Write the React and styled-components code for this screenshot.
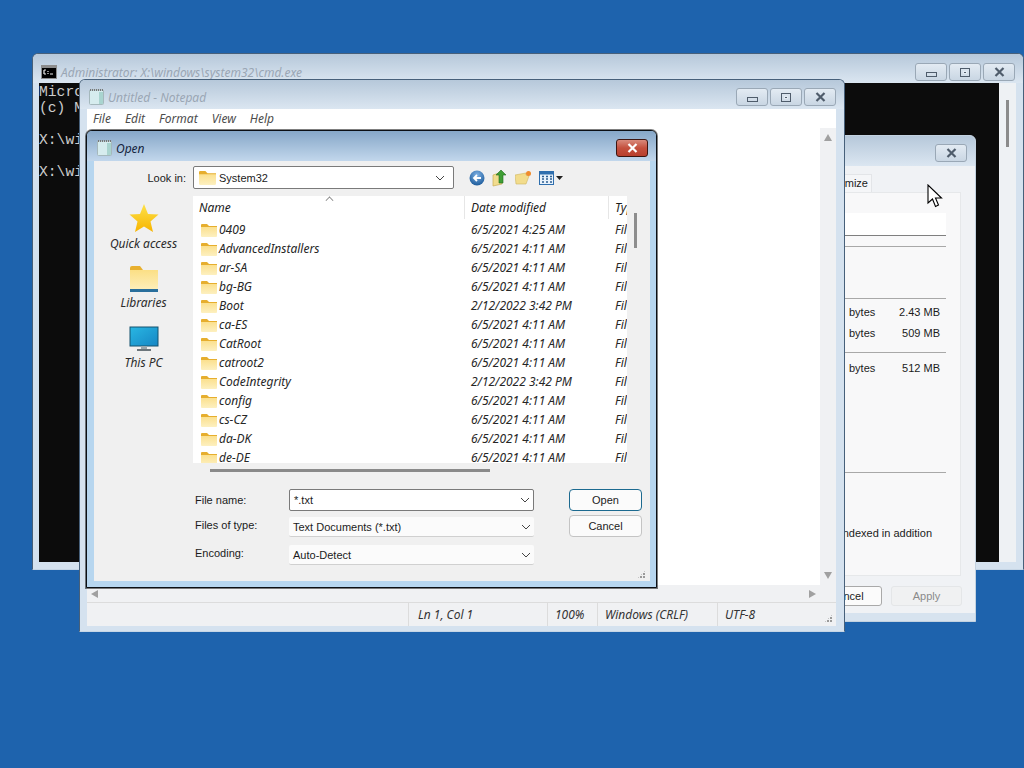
import React from 'react'
import styled, { createGlobalStyle, css } from 'styled-components'

const Global = createGlobalStyle`
  html, body { margin: 0; padding: 0; background: #1e63ad; }
  body { font-family: "Liberation Sans", Arial, sans-serif; font-size: 11px; color: #1b1b1b; }
`

const italicText = css`
  font-family: "Noto Sans", "Liberation Sans", sans-serif;
  font-size: 12px;
  font-style: italic;
`

const files = [
  ['0409', '6/5/2021 4:25 AM'],
  ['AdvancedInstallers', '6/5/2021 4:11 AM'],
  ['ar-SA', '6/5/2021 4:11 AM'],
  ['bg-BG', '6/5/2021 4:11 AM'],
  ['Boot', '2/12/2022 3:42 PM'],
  ['ca-ES', '6/5/2021 4:11 AM'],
  ['CatRoot', '6/5/2021 4:11 AM'],
  ['catroot2', '6/5/2021 4:11 AM'],
  ['CodeIntegrity', '2/12/2022 3:42 PM'],
  ['config', '6/5/2021 4:11 AM'],
  ['cs-CZ', '6/5/2021 4:11 AM'],
  ['da-DK', '6/5/2021 4:11 AM'],
  ['de-DE', '6/5/2021 4:11 AM'],
]

const Folder = ({ size = 16 }) => (
  <svg width={size} height={size * 0.875} viewBox="0 0 16 14">
    <defs>
      <linearGradient id="fold" x1="0" y1="0" x2="0" y2="1">
        <stop offset="0" stopColor="#fbe08e" />
        <stop offset="1" stopColor="#fdf0c0" />
      </linearGradient>
    </defs>
    <path d="M0 2 Q0 1 1 1 H6 L8 3 H16 V5 H0 Z" fill="#e6ae2e" />
    <path d="M0 4 H16 V13 Q16 14 15 14 H1 Q0 14 0 13 Z" fill="url(#fold)" />
  </svg>
)

const Star = () => (
  <svg width="30" height="30" viewBox="0 0 30 30">
    <defs>
      <linearGradient id="star" x1="0" y1="0" x2="0" y2="1">
        <stop offset="0" stopColor="#fde24a" />
        <stop offset="1" stopColor="#f7b400" />
      </linearGradient>
    </defs>
    <path d="M15 1 L19 11 L29.500 11.500 L21.500 18.500 L24 29 L15 23.500 L6 29 L8.500 18.500 L.5 11.500 L11 11 Z" fill="url(#star)" />
  </svg>
)

const LibraryIcon = () => (
  <svg width="30" height="26" viewBox="0 0 30 26">
    <defs>
      <linearGradient id="lib" x1="0" y1="0" x2="0" y2="1">
        <stop offset="0" stopColor="#fbdf85" />
        <stop offset="1" stopColor="#fdeeb8" />
      </linearGradient>
    </defs>
    <path d="M1 2 Q1 0 3 0 H11 L14 4 H29 V8 H1 Z" fill="#e8b02f" />
    <rect x="1" y="4" width="28" height="19" fill="url(#lib)" />
    <rect x="1" y="23" width="28" height="3" fill="#2a6f9c" />
  </svg>
)

const MonitorIcon = () => (
  <svg width="30" height="26" viewBox="0 0 30 26">
    <defs>
      <linearGradient id="mon" x1="0" y1="0" x2="1" y2="1">
        <stop offset="0" stopColor="#29b7e3" />
        <stop offset="1" stopColor="#1686c4" />
      </linearGradient>
    </defs>
    <rect x="1" y="1" width="28" height="19" fill="url(#mon)" stroke="#14526f" />
    <rect x="12" y="20" width="6" height="3" fill="#9aa5ab" />
    <rect x="8" y="23" width="14" height="2" fill="#6b757b" />
  </svg>
)

const CmdIcon = () => (
  <svg width="16" height="14" viewBox="0 0 16 14">
    <rect width="16" height="14" fill="#8d8d8d" />
    <rect x="1" y="3" width="14" height="10" fill="#000" />
    <path d="M3 5 H5 M3 5 V9 M3 9 H5 M7 6 V7 M7 8 V9 M9 9 H12" stroke="#eee" strokeWidth="1.200" fill="none" />
  </svg>
)

const NotepadIcon = () => (
  <svg width="15" height="16" viewBox="0 0 15 16">
    <rect x="0.500" y="1" width="14" height="14.500" rx="1" fill="#d6ecee" stroke="#a5b8bc" />
    <path d="M10 3 V15 H14 V3 Z" fill="#a9d4cf" />
    <path d="M1 1 H14" stroke="#777" strokeDasharray="1 1" strokeWidth="2" />
  </svg>
)

const BackIcon = () => (
  <svg width="16" height="16" viewBox="0 0 16 16">
    <defs>
      <radialGradient id="back" cx="0.500" cy="0.300" r="0.800">
        <stop offset="0" stopColor="#7fb2e5" />
        <stop offset="1" stopColor="#0f4f90" />
      </radialGradient>
    </defs>
    <circle cx="8" cy="8" r="7.500" fill="url(#back)" />
    <path d="M12 8 H5 M8 5 L5 8 L8 11" stroke="#fff" strokeWidth="1.800" fill="none" />
  </svg>
)

const UpIcon = () => (
  <svg width="16" height="18" viewBox="0 0 16 18">
    <path d="M1 6 L10 3 V15 L1 17 Z" fill="#f1dc8e" stroke="#c8ae55" strokeWidth="0.700" />
    <path d="M9 1 L14 6 H11 V14 H7 V6 H4 Z" fill="#3f9e35" stroke="#1f6b1d" strokeWidth="0.600" />
  </svg>
)

const NewFolderIcon = () => (
  <svg width="17" height="15" viewBox="0 0 17 15">
    <path d="M0 5 L11 3 V5 L14 6 L11 14 H1 Z" fill="#f2dc8c" stroke="#cfb560" strokeWidth="0.600" />
    <circle cx="13.500" cy="3.500" r="2.500" fill="#ef8b2c" />
  </svg>
)

const ViewIcon = () => (
  <svg width="24" height="14" viewBox="0 0 24 14">
    <rect x="0.500" y="0.500" width="14" height="13" fill="#e8f2fb" stroke="#2f6fae" />
    <rect x="0.500" y="0.500" width="14" height="3" fill="#2f6fae" />
    <path d="M3 5.500 H5 M7 5.500 H9 M11 5.500 H13 M3 8 H5 M7 8 H9 M11 8 H13 M3 11 H5 M7 11 H9 M11 11 H13" stroke="#2d5f93" strokeWidth="1.500" />
    <path d="M17 5 H24 L20.500 9 Z" fill="#222" />
  </svg>
)

const CursorIcon = () => (
  <svg width="16" height="24" viewBox="0 0 16 24">
    <path d="M1 1 V19 L5.500 15 L8.500 22.500 L11.500 21 L8.500 14 H14.500 Z" fill="#fff" stroke="#000" strokeWidth="1.100" />
  </svg>
)

const Chevron = () => (
  <svg width="10" height="6" viewBox="0 0 10 6">
    <path d="M1 1 L5 5 L9 1" stroke="#444" fill="none" />
  </svg>
)

const CloseGlyph = ({ color = '#4f5c6b' }) => (
  <svg width="11" height="10" viewBox="0 0 11 10">
    <path d="M1.500 1 L9.500 9 M9.500 1 L1.500 9" stroke={color} strokeWidth="2.200" />
  </svg>
)

const Desktop = styled.div`
  position: relative;
  width: 1024px;
  height: 768px;
  overflow: hidden;
  background: #1e63ad;
`

const Frame = styled.div`
  position: absolute;
  left: ${p => p.$x}px;
  top: ${p => p.$y}px;
  width: ${p => p.$w}px;
  height: ${p => p.$h}px;
  box-sizing: border-box;
  display: flex;
  flex-direction: column;
  border-radius: 6px 6px 0 0;
  background: ${p => p.$tint || '#d5e2ef'};
  border: 1px solid ${p => p.$edge || '#47607a'};
  border-bottom-color: ${p => p.$foot || p.$edge || '#c6d6e6'};
  box-shadow: ${p => p.$heavy ? '0 0 0 1px rgba(0, 0, 0, .5)' : 'none'};
`

const TitleBar = styled.div`
  flex: none;
  height: ${p => p.$h}px;
  display: flex;
  align-items: center;
  gap: 4px;
  box-sizing: border-box;
  padding: ${p => p.$drop || 0}px 8px 0 ${p => p.$pad || 8}px;
  border-radius: 5px 5px 0 0;
  background: linear-gradient(${p => p.$from || '#b6c8da'}, ${p => p.$to || '#dbe6f1'});
`

const TitleText = styled.span`
  flex: 1;
  ${italicText}
  color: ${p => p.$active ? '#16263e' : '#9aa6b4'};
  white-space: nowrap;
`

const Caption = styled.div`
  display: flex;
  gap: 2px;
`

const CaptionBtn = styled.button`
  width: 32px;
  height: 18px;
  padding: 0;
  display: flex;
  align-items: center;
  justify-content: center;
  border: 1px solid #9aa8b6;
  border-radius: 3px;
  background: linear-gradient(#e3ebf3, #c9d6e3);
`

const DangerBtn = styled(CaptionBtn)`
  border-color: #3d1510;
  background: linear-gradient(#d98a7c, #c4503e 50%, #b83f2d);
`

const MinGlyph = styled.span`
  display: block;
  width: 9px;
  height: 3px;
  margin-top: 4px;
  border: 1px solid #4f5c6b;
`

const MaxGlyph = styled.span`
  display: block;
  width: 8px;
  height: 7px;
  border: 1px solid #4f5c6b;
  position: relative;
  &::after {
    content: '';
    position: absolute;
    left: 2px;
    top: 2px;
    width: 4px;
    height: 3px;
    background: #4f5c6b;
    outline: 1px solid #e3ebf3;
    outline-offset: -1px;
  }
`

const CmdBody = styled.div`
  flex: 1;
  display: flex;
  min-height: 0;
  padding: 0 7px 7px 6px;
`

const Console = styled.pre`
  flex: none;
  width: 960px;
  margin: 0;
  padding-top: 1px;
  box-sizing: border-box;
  background: #0c0c0c;
  color: #cccccc;
  font-family: "Liberation Mono", monospace;
  font-size: 14.670px;
  line-height: 16px;
  overflow: hidden;
`

const CmdTrack = styled.div`
  flex: 1;
  position: relative;
  background: #eef1f4;
  &::after {
    content: '';
    position: absolute;
    left: 7px;
    top: 17px;
    width: 3px;
    height: 47px;
    background: #8b8b8b;
  }
`

const PropsBody = styled.div`
  flex: 1;
  display: flex;
  flex-direction: column;
  padding: 0 14px 9px 10px;
  min-height: 0;
  background: #f0f2f5;
  margin: 0 0 8px 0;
`

const TabRow = styled.div`
  flex: none;
  height: 26px;
  display: flex;
  justify-content: flex-end;
  align-items: flex-end;
  padding-right: 89px;
`

const Tab = styled.div`
  height: 17px;
  line-height: 16px;
  padding: 0 3px 0 40px;
  background: #f5f6f8;
  border: 1px solid #e3e5e8;
  border-bottom: 0;
`

const PropsPanel = styled.div`
  flex: none;
  height: 384px;
  box-sizing: border-box;
  background: #f8f8f9;
  border: 1px solid #e6e8ea;
  padding: 20px 14px 0 0;
  display: flex;
  flex-direction: column;
`

const PropsInput = styled.div`
  height: 22px;
  background: #fff;
  border-bottom: 1px solid #7f7f7f;
`

const Rule = styled.div`
  flex: none;
  height: 1px;
  margin-top: ${p => p.$top}px;
  background: #a8a8a8;
`

const SizeRow = styled.div`
  height: 21px;
  line-height: 21px;
  margin-top: ${p => p.$top || 0}px;
  display: flex;
  justify-content: flex-end;
  padding-right: 6px;
`

const SizeUnit = styled.span`
  margin-right: auto;
  margin-left: 277px;
`

const PropsNote = styled.div`
  margin-top: 54px;
  text-align: right;
  padding-right: 14px;
  white-space: nowrap;
`

const PropsFooter = styled.div`
  flex: none;
  display: flex;
  justify-content: flex-end;
  gap: 9px;
  margin-top: 10px;
  margin-right: -1px;
`

const FootBtn = styled.div`
  width: 71px;
  height: 20px;
  line-height: 18px;
  box-sizing: border-box;
  text-align: center;
  border-radius: 3px;
  border: 1px solid ${p => p.$off ? '#e4e6e8' : '#a9a9a9'};
  color: ${p => p.$off ? '#8a8a8a' : '#1b1b1b'};
  background: ${p => p.$off ? '#f0f1f2' : '#fbfbfb'};
`

const NoteBody = styled.div`
  flex: 1;
  display: flex;
  flex-direction: column;
  min-height: 0;
  padding: 0 8px 7px 7px;
`

const MenuBar = styled.div`
  flex: none;
  height: 19px;
  display: flex;
  align-items: center;
  gap: 14px;
  padding-left: 6px;
  background: #fff;
  ${italicText}
  color: #4c4c4c;
`

const EditorRow = styled.div`
  flex: none;
  height: 457px;
  display: flex;
  background: #fff;
`

const EditorArea = styled.div`
  flex: 1;
`

const VTrack = styled.div`
  flex: none;
  width: 16px;
  display: flex;
  flex-direction: column;
  justify-content: space-between;
  align-items: center;
  padding: 6px 0;
  box-sizing: border-box;
  background: #f0f1f3;
`

const Arrow = styled.span`
  width: 0;
  height: 0;
  border-style: solid;
  border-color: transparent;
  ${p => p.$dir === 'up' && 'border-width: 0 4px 7px; border-bottom-color: #a0a0a0;'}
  ${p => p.$dir === 'down' && 'border-width: 7px 4px 0; border-top-color: #a0a0a0;'}
  ${p => p.$dir === 'left' && 'border-width: 4px 7px 4px 0; border-right-color: #a0a0a0;'}
  ${p => p.$dir === 'right' && 'border-width: 4px 0 4px 7px; border-left-color: #a0a0a0;'}
`

const HTrack = styled.div`
  flex: none;
  height: 17px;
  display: flex;
  justify-content: space-between;
  align-items: center;
  padding: 0 20px 0 4px;
  background: #f0f1f3;
  border-bottom: 1px solid #dcdcdc;
`

const StatusBar = styled.div`
  flex: 1;
  display: grid;
  grid-template-columns: 321px 139px 50px 120px 1fr;
  align-items: stretch;
  background: #f0f1f3;
  ${italicText}
  color: #333;
  position: relative;
`

const StatusCell = styled.div`
  display: flex;
  align-items: center;
  padding-left: ${p => p.$wide ? 9 : 7}px;
  border-left: ${p => p.$plain ? '0' : '1px solid #dcdcdc'};
  white-space: nowrap;
  height: 23px;
`

const Grip = styled.div`
  position: absolute;
  right: ${p => p.$right || 3}px;
  bottom: ${p => p.$bottom || 3}px;
  width: 9px;
  height: 9px;
  background-image: radial-gradient(circle at 1px 1px, #9a9a9a 1px, transparent 1.200px);
  background-size: 3px 3px;
  clip-path: polygon(100% 0, 100% 100%, 0 100%);
`

const DialogBody = styled.div`
  flex: 1;
  position: relative;
  min-height: 0;
  box-sizing: border-box;
  margin: 0 6px 6px 7px;
  background: #f0f0f0;
  display: grid;
  grid-template-columns: 99px 1fr;
  grid-template-rows: 35px 267px 1fr;
`

const LookRow = styled.div`
  grid-column: 1 / 3;
  display: flex;
  align-items: center;
  padding-bottom: 2px;
  box-sizing: border-box;
`

const LookLabel = styled.label`
  width: 99px;
  text-align: right;
  padding-right: 7px;
  box-sizing: border-box;
  flex: none;
`

const LookCombo = styled.div`
  flex: none;
  width: 261px;
  height: 23px;
  box-sizing: border-box;
  display: flex;
  align-items: center;
  gap: 3px;
  padding: 0 8px 0 5px;
  background: #fff;
  border: 1px solid #7a7a7a;
  border-radius: 2px;
`

const ComboText = styled.span`
  flex: 1;
  white-space: nowrap;
`

const ToolGroup = styled.div`
  display: flex;
  align-items: center;
  gap: 7px;
  margin-left: 15px;
`

const Places = styled.div`
  display: flex;
  flex-direction: column;
  align-items: center;
  padding-top: 7px;
  ${italicText}
`

const Place = styled.div`
  display: flex;
  flex-direction: column;
  align-items: center;
  flex: none;
  height: ${p => p.$h}px;
  box-sizing: border-box;
  gap: 2px;
  color: #2b2b2b;
`

const ListWrap = styled.div`
  position: relative;
  display: flex;
  min-height: 0;
`

const List = styled.div`
  width: 434px;
  flex: none;
  background: #fff;
  overflow: hidden;
  ${italicText}
`

const ListHead = styled.div`
  height: 24px;
  display: grid;
  grid-template-columns: 271px 144px 1fr;
  align-items: start;
  position: relative;
`

const HeadCell = styled.div`
  padding-left: 6px;
  height: 23px;
  line-height: 23px;
  border-left: ${p => p.$first ? '0' : '1px solid #e6e6e6'};
  box-sizing: border-box;
  white-space: nowrap;
`

const SortCaret = styled.span`
  position: absolute;
  left: 133px;
  top: 1px;
  width: 6px;
  height: 6px;
  border-left: 1px solid #777;
  border-top: 1px solid #777;
  transform: rotate(45deg) scale(.8);
`

const FileRow = styled.div`
  height: 19px;
  display: grid;
  grid-template-columns: 271px 144px 1fr;
  align-items: center;
  white-space: nowrap;
  color: #262626;
`

const NameCell = styled.div`
  display: flex;
  align-items: center;
  gap: 2px;
  padding-left: 8px;
`

const PlainCell = styled.div`
  padding-left: 7px;
`

const VThumb = styled.div`
  position: absolute;
  left: 441px;
  top: 17px;
  width: 3px;
  height: 35px;
  background: #8d8d8d;
`

const FormArea = styled.div`
  grid-column: 2;
  position: relative;
  display: grid;
  grid-template-columns: 94px 245px 1fr;
  grid-template-rows: 21px 21px 21px;
  row-gap: 7px;
  padding-top: 26px;
  padding-left: 2px;
  align-items: center;
`

const HScroll = styled.div`
  position: absolute;
  left: 17px;
  top: 6px;
  width: 280px;
  height: 3px;
  background: #8a8a8a;
`

const FormLabel = styled.label`
  margin-bottom: ${p => p.$raise || 0}px;
`

const Combo = styled.div`
  height: ${p => p.$edit ? 22 : 20}px;
  box-sizing: border-box;
  display: flex;
  align-items: center;
  padding: 0 3px 0 4px;
  margin-bottom: ${p => p.$edit ? 0 : 1}px;
  background: ${p => p.$edit ? '#fff' : '#fbfbfb'};
  border: ${p => p.$edit ? '1px solid #7a7a7a' : '0'};
  border-bottom: 1px solid ${p => p.$edit ? '#7a7a7a' : '#d0d0d0'};
  border-radius: 2px;
`

const DlgBtn = styled.button`
  width: 73px;
  height: 22px;
  margin-left: 35px;
  margin-bottom: ${p => p.$raise || 0}px;
  padding: 0;
  font-family: inherit;
  font-size: 11px;
  color: #1b1b1b;
  border-radius: 4px;
  background: #fbfbfb;
  border: 1px solid ${p => p.$main ? '#1c6a90' : '#c4c4c4'};
`

const Pointer = styled.div`
  position: absolute;
  left: 927px;
  top: 184px;
  line-height: 0;
`

const App = () => (
  <Desktop>
    <Global />

    <Frame $x={32} $y={53} $w={992} $h={517}>
      <TitleBar $h={29} $drop={7}>
        <CmdIcon />
        <TitleText>Administrator: X:\windows\system32\cmd.exe</TitleText>
        <Caption>
          <CaptionBtn><MinGlyph /></CaptionBtn>
          <CaptionBtn><MaxGlyph /></CaptionBtn>
          <CaptionBtn><CloseGlyph /></CaptionBtn>
        </Caption>
      </TitleBar>
      <CmdBody>
        <Console>{`Microsoft Windows [Version 10.0.22000.434]
(c) Microsoft Corporation. All rights reserved.

X:\\windows\\system32>notepad

X:\\windows\\system32>`}</Console>
        <CmdTrack />
      </CmdBody>
    </Frame>

    <Frame $x={560} $y={135} $w={416} $h={487} $edge="#c3d2e0" $tint="#d7e3ef">
      <TitleBar $h={30} $drop={3}>
        <TitleText />
        <Caption><CaptionBtn><CloseGlyph /></CaptionBtn></Caption>
      </TitleBar>
      <PropsBody>
        <TabRow><Tab>Customize</Tab></TabRow>
        <PropsPanel>
          <PropsInput />
          <Rule $top={10} />
          <Rule $top={51} />
          <SizeRow $top={3}><SizeUnit>bytes</SizeUnit>2.43 MB</SizeRow>
          <SizeRow><SizeUnit>bytes</SizeUnit>509 MB</SizeRow>
          <Rule $top={8} />
          <SizeRow $top={5}><SizeUnit>bytes</SizeUnit>512 MB</SizeRow>
          <Rule $top={93} />
          <PropsNote>Allow files on this drive to have contents indexed in addition</PropsNote>
        </PropsPanel>
        <PropsFooter>
          <FootBtn>Cancel</FootBtn>
          <FootBtn $off>Apply</FootBtn>
        </PropsFooter>
      </PropsBody>
    </Frame>

    <Frame $x={79} $y={79} $w={766} $h={553}>
      <TitleBar $h={29} $pad={9} $drop={5}>
        <NotepadIcon />
        <TitleText>Untitled - Notepad</TitleText>
        <Caption>
          <CaptionBtn><MinGlyph /></CaptionBtn>
          <CaptionBtn><MaxGlyph /></CaptionBtn>
          <CaptionBtn><CloseGlyph /></CaptionBtn>
        </Caption>
      </TitleBar>
      <NoteBody>
        <MenuBar>
          <span>File</span><span>Edit</span><span>Format</span><span>View</span><span>Help</span>
        </MenuBar>
        <EditorRow>
          <EditorArea />
          <VTrack><Arrow $dir="up" /><Arrow $dir="down" /></VTrack>
        </EditorRow>
        <HTrack><Arrow $dir="left" /><Arrow $dir="right" /></HTrack>
        <StatusBar>
          <StatusCell $plain />
          <StatusCell $wide>Ln 1, Col 1</StatusCell>
          <StatusCell>100%</StatusCell>
          <StatusCell>Windows (CRLF)</StatusCell>
          <StatusCell>UTF-8</StatusCell>
          <Grip />
        </StatusBar>
      </NoteBody>
    </Frame>

    <Frame $x={86} $y={130} $w={571} $h={458} $edge="#0b0f14" $tint="#b7d6ef" $heavy>
      <TitleBar $h={30} $from="#86a7c8" $to="#c2d7ec" $pad={10} $drop={4}>
        <NotepadIcon />
        <TitleText $active>Open</TitleText>
        <Caption>
          <DangerBtn><CloseGlyph color="#fff" /></DangerBtn>
        </Caption>
      </TitleBar>
      <DialogBody>
        <LookRow>
          <LookLabel>Look in:</LookLabel>
          <LookCombo>
            <Folder size={17} />
            <ComboText>System32</ComboText>
            <Chevron />
          </LookCombo>
          <ToolGroup>
            <BackIcon />
            <UpIcon />
            <NewFolderIcon />
            <ViewIcon />
          </ToolGroup>
        </LookRow>
        <Places>
          <Place $h={63}><Star />Quick access</Place>
          <Place $h={60}><LibraryIcon />Libraries</Place>
          <Place $h={60}><MonitorIcon />This PC</Place>
        </Places>
        <ListWrap>
          <List>
            <ListHead>
              <HeadCell $first>Name</HeadCell>
              <HeadCell>Date modified</HeadCell>
              <HeadCell>Type</HeadCell>
              <SortCaret />
            </ListHead>
            {files.map(([name, date]) => (
              <FileRow key={name}>
                <NameCell><Folder />{name}</NameCell>
                <PlainCell>{date}</PlainCell>
                <PlainCell>File folder</PlainCell>
              </FileRow>
            ))}
          </List>
          <VThumb />
        </ListWrap>
        <div />
        <FormArea>
          <HScroll />
          <FormLabel>File name:</FormLabel>
          <Combo $edit><ComboText>*.txt</ComboText><Chevron /></Combo>
          <DlgBtn $main>Open</DlgBtn>
          <FormLabel $raise={5}>Files of type:</FormLabel>
          <Combo><ComboText>Text Documents (*.txt)</ComboText><Chevron /></Combo>
          <DlgBtn $raise={4}>Cancel</DlgBtn>
          <FormLabel $raise={5}>Encoding:</FormLabel>
          <Combo><ComboText>Auto-Detect</ComboText><Chevron /></Combo>
          <span />
        </FormArea>
        <Grip $right={4} $bottom={2} />
      </DialogBody>
    </Frame>

    <Pointer><CursorIcon /></Pointer>
  </Desktop>
)

export default App
